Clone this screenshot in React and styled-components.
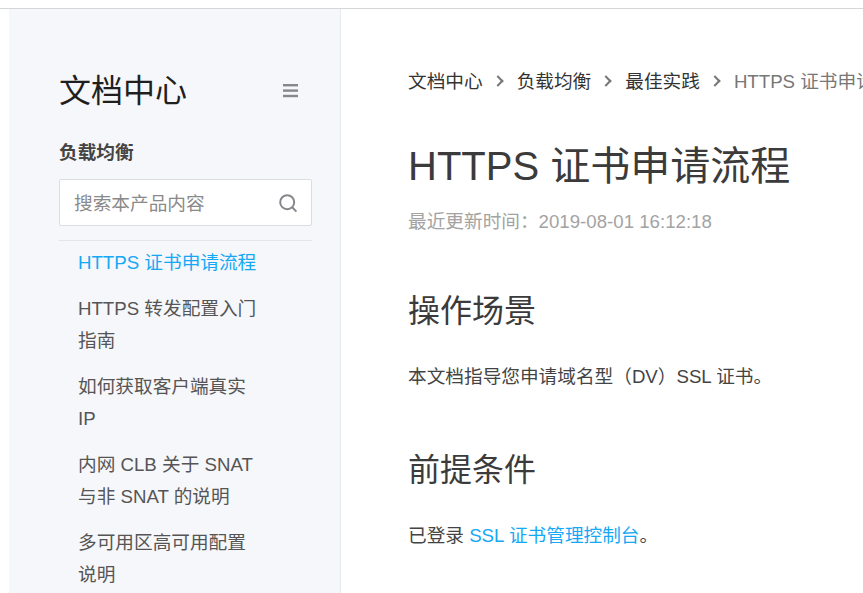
import React from 'react';
import styled, { createGlobalStyle } from 'styled-components';

const GlobalStyle = createGlobalStyle`
  html, body {
    margin: 0;
    height: 100%;
    overflow: hidden;
    background: #fff;
  }
  body {
    font-family: 'Liberation Sans', 'Noto Sans CJK SC', sans-serif;
  }
`;

const menuItems = [
  ['HTTPS 证书申请流程', true],
  ['HTTPS 转发配置入门指南'],
  ['如何获取客户端真实 IP'],
  ['内网 CLB 关于 SNAT 与非 SNAT 的说明'],
  ['多可用区高可用配置说明'],
];

function App() {
  return (
    <Page>
      <GlobalStyle />
      <Sidebar>
        <SideHeader>
          <SideTitle>文档中心</SideTitle>
          <MenuIcon width="16" height="14" viewBox="0 0 16 14">
            <rect x="0" y="0" width="15" height="2.4" />
            <rect x="0" y="5.4" width="15" height="2.4" />
            <rect x="0" y="10.8" width="15" height="2.4" />
          </MenuIcon>
        </SideHeader>
        <ProductName>负载均衡</ProductName>
        <SearchBox>
          <SearchText>搜索本产品内容</SearchText>
          <svg width="20" height="20" viewBox="0 0 20 20" fill="none" stroke="#85888c" strokeWidth="2">
            <circle cx="9.2" cy="9.2" r="7" />
            <path d="M14 14l4.4 4.6" />
          </svg>
        </SearchBox>
        <Menu>
          {menuItems.map(([label, active]) => (
            <MenuItem key={label} $active={active}>{label}</MenuItem>
          ))}
        </Menu>
      </Sidebar>
      <Main>
        <Breadcrumb>
          <Crumb>文档中心</Crumb>
          <Sep />
          <Crumb>负载均衡</Crumb>
          <Sep />
          <Crumb>最佳实践</Crumb>
          <Sep />
          <Crumb $current>HTTPS 证书申请流程</Crumb>
        </Breadcrumb>
        <Title>HTTPS 证书申请流程</Title>
        <Updated>最近更新时间：2019-08-01 16:12:18</Updated>
        <Heading $top={49}>操作场景</Heading>
        <Para>本文档指导您申请域名型（DV）SSL 证书。</Para>
        <Heading $top={53}>前提条件</Heading>
        <Para>已登录 <DocLink>SSL 证书管理控制台</DocLink>。</Para>
      </Main>
    </Page>
  );
}

const Page = styled.div`
  display: flex;
  width: 863px;
  height: 585px;
  box-sizing: border-box;
  margin-top: 8px;
  padding-left: 9px;
  border-top: 1px solid #d5d6d8;
  overflow: hidden;
  color: #333;
`;

const Sidebar = styled.aside`
  flex: 0 0 332px;
  box-sizing: border-box;
  height: 100%;
  padding: 58px 28px 0 50px;
  background: #f6f7fa;
  border-right: 1px solid #e8e9ec;
`;

const SideHeader = styled.div`
  display: flex;
  align-items: center;
  justify-content: space-between;
  height: 48px;
  padding-right: 13px;
`;

const SideTitle = styled.div`
  font-size: 32px;
  line-height: 48px;
  color: #1f1f1f;
`;

const MenuIcon = styled.svg`
  fill: #85888e;
`;

const ProductName = styled.div`
  margin-top: 22px;
  font-size: 18.67px;
  line-height: 32px;
  font-weight: bold;
  color: #444;
`;

const SearchBox = styled.div`
  display: flex;
  align-items: center;
  justify-content: space-between;
  box-sizing: border-box;
  height: 47px;
  margin-top: 10px;
  padding: 0 13px 0 14px;
  background: #fff;
  border: 1px solid #dcdde0;
  border-radius: 2px;
`;

const SearchText = styled.span`
  padding-bottom: 3px;
  font-size: 18.67px;
  color: #8a8a8a;
`;

const Menu = styled.ul`
  list-style: none;
  margin: 14px 0 0;
  padding: 6px 0 0 19px;
  border-top: 1px solid #e4e5e8;
`;

const MenuItem = styled.li`
  width: 186px;
  margin-bottom: 14px;
  font-size: 18.67px;
  line-height: 32px;
  color: ${(p) => (p.$active ? '#14a8f5' : '#555')};
`;

const Main = styled.main`
  flex: 1;
  min-width: 0;
  padding: 54px 0 0 67px;
  white-space: nowrap;
  overflow: hidden;
`;

const Breadcrumb = styled.nav`
  display: flex;
  align-items: center;
  height: 32px;
  font-size: 18.67px;
`;

const Crumb = styled.span`
  flex-shrink: 0;
  color: ${(p) => (p.$current ? '#777' : '#333')};
`;

const Sep = styled.i`
  flex: 0 0 8px;
  height: 8px;
  margin: 4px 15px 0 11px;
  border-top: 2px solid #777;
  border-right: 2px solid #777;
  transform: rotate(45deg);
  box-sizing: border-box;
`;

const Title = styled.h1`
  margin: 41px 0 0;
  font-size: 40px;
  line-height: 60px;
  font-weight: normal;
  color: #3b3b3b;
`;

const Updated = styled.div`
  margin-top: 10px;
  font-size: 18.67px;
  line-height: 32px;
  color: #a3a3a3;
`;

const Heading = styled.h2`
  margin: ${(p) => p.$top}px 0 0;
  font-size: 32px;
  line-height: 48px;
  font-weight: normal;
  color: #3b3b3b;
`;

const Para = styled.p`
  margin: 26px 0 0;
  font-size: 18.67px;
  line-height: 32px;
  color: #444;
`;

const DocLink = styled.a`
  color: #14a8f5;
`;

export default App;
